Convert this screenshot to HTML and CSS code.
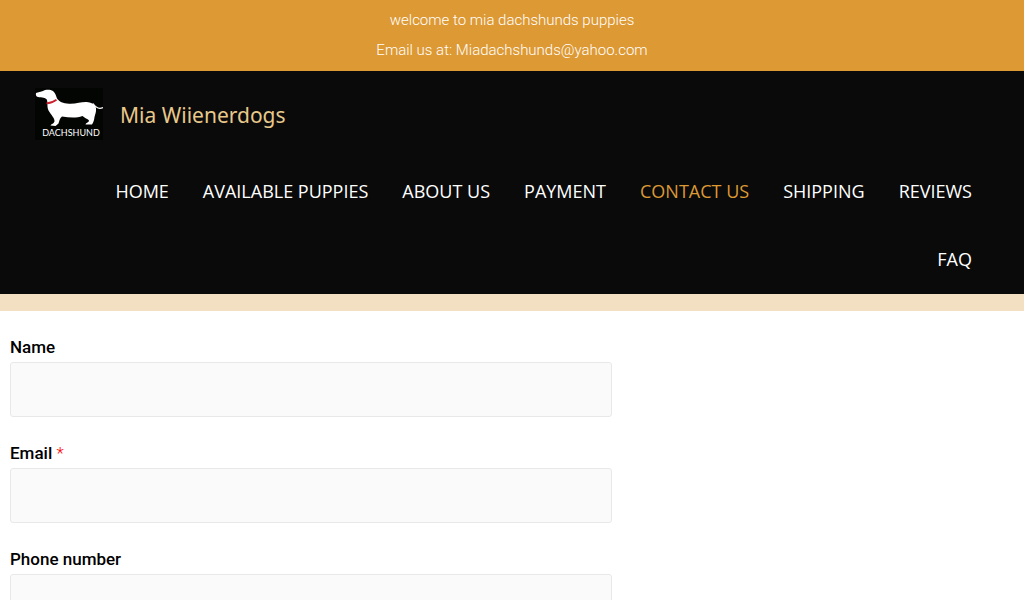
FILE: index.html
```html
<!DOCTYPE html>
<html lang="en">
<head>
<meta charset="utf-8">
<meta name="viewport" content="width=device-width, initial-scale=1">
<title>Contact Us – Mia Wiienerdogs</title>
<link rel="stylesheet" href="styles.css">
</head>
<body>
<div class="topbar">
  <p class="topbar-line">welcome to mia dachshunds puppies</p>
  <p class="topbar-line">Email us at: Miadachshunds@yahoo.com</p>
</div>
<header class="header">
  <div class="brand">
    <a class="brand-logo" href="#" aria-label="Mia Wiienerdogs home">
      <svg class="logo" viewBox="0 0 68 52" aria-hidden="true">
        <rect width="68" height="52" fill="#020502"/>
        <path d="M1 5 C3 4 6 4 8 3 C10 1.500 15 1 18 3 C20.500 5 21 8 22 10.500 C24 13.500 28 15.500 34 15.700 C42 16 47 13.500 53 14.200 C57.500 14.700 60.500 17 61 20 C61.500 24 60 26 59.500 29 C59.200 32 58.500 34 57 36.500 L50.500 36.500 C50.500 35 53.500 34.500 54 33 C54 31 50 30.500 47.500 28 C41 30.500 34 29.500 27 28.500 C24.500 30 24.500 33 23.500 35.500 L20.500 38 L15.500 37.500 C16 36 19.500 35.500 19.500 33 C19 29 16 27 14.500 24 C11.500 20 13 16 12 12 C10.500 9 7 10 3 9 C1 8.500 .5 6.500 1 5 Z" fill="#fff"/>
        <path d="M58 15.500 C61 20 65 21 68 19.500" fill="none" stroke="#fff" stroke-width="1.300"/>
        <path d="M11.500 15.300 C15 15.300 18.500 14 21.500 11.800" fill="none" stroke="#c9202c" stroke-width="1.800"/>
        <text class="logo-text" x="36" y="48" text-anchor="middle">DACHSHUND</text>
      </svg>
    </a>
    <a class="brand-name" href="#">Mia Wiienerdogs</a>
  </div>
  <nav class="nav" aria-label="Main">
    <a class="nav-link" href="#">HOME</a>
    <a class="nav-link" href="#">AVAILABLE PUPPIES</a>
    <a class="nav-link" href="#">ABOUT US</a>
    <a class="nav-link" href="#">PAYMENT</a>
    <a class="nav-link nav-link-current" href="#" aria-current="page">CONTACT US</a>
    <a class="nav-link" href="#">SHIPPING</a>
    <a class="nav-link" href="#">REVIEWS</a>
    <a class="nav-link" href="#">FAQ</a>
  </nav>
</header>
<main class="main">
  <form class="form">
    <div class="field">
      <label class="label" for="name">Name</label>
      <input class="input" id="name" type="text">
    </div>
    <div class="field">
      <label class="label" for="email">Email <span class="required">*</span></label>
      <input class="input" id="email" type="email" required>
    </div>
    <div class="field">
      <label class="label" for="phone">Phone number</label>
      <input class="input" id="phone" type="tel">
    </div>
  </form>
</main>
</body>
</html>
```

FILE: styles.css
```css
*, *::before, *::after { box-sizing: border-box; }
html { scrollbar-width: none; }
body { margin: 0; background: #fff; color: #000; font-family: "Open Sans", "Noto Sans", sans-serif; }
a { text-decoration: none; }

.topbar { padding: 5px 16px 6px; background: #dd9933; color: #fff; text-align: center; font-family: Roboto, sans-serif; font-size: 15px; font-weight: 300; line-height: 30px; }
.topbar-line { margin: 0; }

.header { padding: 0 35px; background: #0a0a0a; border-bottom: 17px solid #f3e0c3; }
.brand { display: flex; align-items: center; gap: 17px; padding: 17px 0 18px; }
.brand-logo { display: block; }
.logo { display: block; width: 68px; height: 52px; }
.logo-text { font-family: "Liberation Sans Narrow", Lato, sans-serif; font-size: 9px; fill: #fff; }
.brand-name { padding-top: 2px; color: #e8c88b; font-family: "Noto Sans", sans-serif; font-size: 21px; line-height: 36px; }

.nav { display: flex; flex-wrap: wrap; justify-content: flex-end; }
.nav-link { padding: 0 17px 2px; color: #fff; font-size: 18px; line-height: 66px; font-kerning: none; }
.nav-link-current { color: #dd9933; }

.main { padding: 22px 10px; }
.form { display: flex; flex-direction: column; gap: 22px; }
.label { display: block; font-family: Roboto, sans-serif; font-size: 17px; font-weight: 500; line-height: 29px; }
.required { color: #f00; font-weight: 300; }
.input { display: block; width: 60%; min-width: 240px; height: 55px; padding: 12px; border: 1px solid #e8e8e8; border-radius: 3px; background: #fafafa; font: inherit; }
```
